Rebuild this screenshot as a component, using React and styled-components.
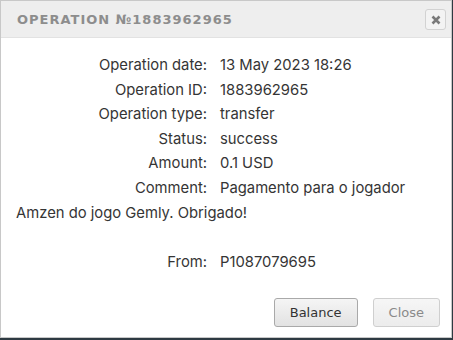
import styled, { createGlobalStyle } from "styled-components";

const GlobalStyle = createGlobalStyle`
  html, body {
    margin: 0;
    padding: 0;
    background: #2e3a42;
  }
`;

const Dialog = styled.div`
  width: 452px;
  height: 338px;
  box-sizing: border-box;
  background: #fff;
  border: 1px solid #c8c8c8;
  display: flex;
  flex-direction: column;
`;

const TitleBar = styled.div`
  height: 36px;
  flex: none;
  background: #eeeeee;
  border-bottom: 1px solid #e2e2e2;
  display: flex;
  align-items: center;
  justify-content: space-between;
  padding: 0 5px 0 16px;
`;

const Title = styled.span`
  font-family: "DejaVu Sans", sans-serif;
  font-size: 13px;
  font-weight: 600;
  letter-spacing: 1px;
  color: #8d8d8d;
`;

const CloseIcon = styled.button`
  width: 21px;
  height: 21px;
  padding: 0;
  margin-top: 1px;
  border: 1px solid #d2d2d2;
  border-radius: 3px;
  background: #f3f3f3;
  display: flex;
  align-items: center;
  justify-content: center;
`;

const Content = styled.div`
  flex: 1;
  padding: 15px 16px 0 15px;
  font-family: Inter, sans-serif;
  font-size: 14.8px;
  line-height: 24.6px;
  color: #353535;
`;

const Row = styled.div``;

const Label = styled.span`
  display: inline-block;
  width: 191px;
  margin-right: 13px;
  text-align: right;
`;

const Blank = styled.div`
  height: 24.6px;
`;

const Footer = styled.div`
  display: flex;
  justify-content: flex-end;
  gap: 15px;
  padding: 0 11px 10px 0;
`;

const Button = styled.button`
  height: 29px;
  padding: 0 15px;
  font-family: "DejaVu Sans", sans-serif;
  font-size: 13px;
  border-radius: 3px;
  border: 1px solid ${(p) => (p.disabled ? "#cfcfcf" : "#a9a9a9")};
  color: ${(p) => (p.disabled ? "#8a8a8a" : "#333")};
  background: ${(p) =>
    p.disabled
      ? "linear-gradient(#f6f6f6, #ececec)"
      : "linear-gradient(#f5f5f5, #e2e2e2)"};
`;

const rows = [
  ["Operation date:", "13 May 2023 18:26"],
  ["Operation ID:", "1883962965"],
  ["Operation type:", "transfer"],
  ["Status:", "success"],
  ["Amount:", "0.1 USD"],
  ["Comment:", "Pagamento para o jogador Amzen do jogo Gemly. Obrigado!"],
];

export default function App() {
  return (
    <>
      <GlobalStyle />
      <Dialog>
        <TitleBar>
          <Title>OPERATION №1883962965</Title>
          <CloseIcon>
            <svg width="10" height="10" viewBox="0 0 10 10">
              <path
                d="M1.5 1.5 L8.5 8.5 M8.5 1.5 L1.5 8.5"
                stroke="#7a7a7a"
                strokeWidth="2.6"
              />
            </svg>
          </CloseIcon>
        </TitleBar>
        <Content>
          {rows.map(([label, value]) => (
            <Row key={label}>
              <Label>{label}</Label>
              {value}
            </Row>
          ))}
          <Blank />
          <Row>
            <Label>From:</Label>
            P1087079695
          </Row>
        </Content>
        <Footer>
          <Button>Balance</Button>
          <Button disabled>Close</Button>
        </Footer>
      </Dialog>
    </>
  );
}
